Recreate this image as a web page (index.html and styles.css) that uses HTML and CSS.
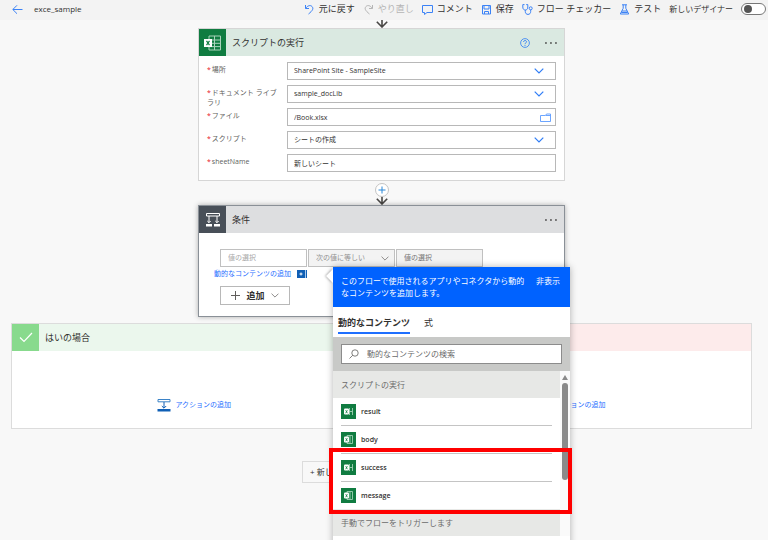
FILE: index.html
```html
<!DOCTYPE html>
<html lang="ja">
<head>
<meta charset="utf-8">
<title>exce_sample</title>
<link rel="stylesheet" href="styles.css">
</head>
<body>
<svg class="defs" aria-hidden="true">
  <symbol id="excel" viewBox="0 0 18 16"><path d="M5 1h11.500v14H5zM5 5h11.500M5 8.300h11.500M5 11.600h11.500M10.500 1v14" fill="none" stroke="#a9d3bb"/><path d="M0 4h8v8H0z" fill="#fff"/><path d="M2.500 5.800l3 4.400M5.500 5.800l-3 4.400" stroke="#107c41" stroke-width="1.200"/></symbol>
  <symbol id="excel-item" viewBox="0 0 15 15"><path d="M8.500 4v7M11.500 4v7M7 7.500h4.500" fill="none" stroke="#9fd0b4" stroke-width=".9"/><rect x="3" y="4.500" width="5" height="6" rx="1" fill="#fff"/><path d="M4.700 6.200l1.700 3M6.400 6.200l-1.700 3" stroke="#107c41" stroke-width=".8"/></symbol>
  <symbol id="excel-doc" viewBox="0 0 15 15"><path d="M6 3.500h5.500v8H6zM9 3.500v8" fill="none" stroke="#9fd0b4" stroke-width=".9"/><rect x="3" y="4.500" width="5" height="6" rx="1" fill="#fff"/><path d="M4.700 6.200l1.700 3M6.400 6.200l-1.700 3" stroke="#107c41" stroke-width=".8"/></symbol>
  <symbol id="chevron" viewBox="0 0 10 6"><path d="M.7.700L5 5 9.300.700" fill="none" stroke="currentColor" stroke-width="1.200"/></symbol>
  <symbol id="arrow" viewBox="0 0 12 8"><path d="M6 0v7M.8 1.800L6 7l5.200-5.200" fill="none" stroke="#484644" stroke-width="1.600"/></symbol>
  <symbol id="action" viewBox="0 0 14 14"><path d="M1 1.500h12v2.300H1z" fill="#fff" stroke="#3b83c7"/><path d="M7 4v6M4.800 8L7 10.200 9.200 8" fill="none" stroke="#0f5fb5"/><path d="M.5 11h13v2.500H.5z" fill="#0f5fb5"/></symbol>
</svg>
<div class="app">
  <header class="topbar">
    <button class="tool" aria-label="戻る"><svg class="icon-back" viewBox="0 0 11 10"><path d="M10.500 5H1M5 .8L.8 5 5 9.200" fill="none" stroke="currentColor"/></svg></button>
    <h1 class="title">exce_sample</h1>
    <nav class="tools">
      <button class="tool"><svg viewBox="0 0 11 11"><path d="M1.500 1v3.500H5M1.800 4.300C3.500 1.500 6.500.8 8 2.500c1.800 2 .8 4-3.500 7.500" fill="none" stroke="currentColor"/></svg><span>元に戻す</span></button>
      <button class="tool" disabled><svg viewBox="0 0 11 11"><path d="M9.500 1v3.500H6M9.200 4.300C7.500 1.500 4.500.8 3 2.500c-1.800 2-.8 4 3.500 7.500" fill="none" stroke="currentColor"/></svg><span>やり直し</span></button>
      <button class="tool"><svg viewBox="0 0 11 11"><path d="M.5 1.500h10v7H5L2.500 10.500v-2h-2z" fill="none" stroke="currentColor"/></svg><span>コメント</span></button>
      <button class="tool"><svg viewBox="0 0 11 11"><path d="M1.500 1.500h8v8.500h-8zM3 1.500v3.500h5V1.500M3.500 10V7.500h4V10" fill="none" stroke="currentColor"/></svg><span>保存</span></button>
      <button class="tool"><svg viewBox="0 0 11 11"><path d="M2.500.6H.8V3c0 2 1 3 2.500 3S5.800 5 5.800 3V.6H4.200M3.300 6v1.500C3.300 9.500 4.500 10.400 6 10.400s2.700-1 2.700-3V5.800" fill="none" stroke="currentColor"/><circle cx="8.700" cy="4.300" r="1.500" fill="none" stroke="currentColor"/></svg><span>フロー チェッカー</span></button>
      <button class="tool"><svg viewBox="0 0 11 11"><path d="M3 .8h5M4.200.8v3.500L1.300 10h8.400L6.800 4.300V.8M3 7h5M2.300 8.500h6.400" fill="none" stroke="currentColor"/></svg><span>テスト</span></button>
      <label class="designer" for="designer">新しいデザイナー</label>
      <input class="toggle" id="designer" type="checkbox" role="switch">
    </nav>
  </header>

  <main class="flow">
    <svg class="arrow" aria-hidden="true"><use href="#arrow"/></svg>
    <section class="card">
      <div class="card-head excel-head">
        <span class="tile green"><svg class="tile-icon"><use href="#excel"/></svg></span>
        <h2>スクリプトの実行</h2>
        <button class="plain blue" aria-label="ヘルプ"><svg class="help" viewBox="0 0 10 10"><circle cx="5" cy="5" r="4.400" fill="none" stroke="currentColor" stroke-width=".8"/><path d="M3.600 4c0-2 2.900-2 2.900-.2C6.500 5 5 4.800 5 6.200M5 7v.9" fill="none" stroke="currentColor" stroke-width=".9"/></svg></button>
        <button class="plain" aria-label="メニュー"><svg class="dots" viewBox="0 0 14 4"><path d="M1.200 1.300h1.500v1.500H1.200zM6.200 1.300h1.500v1.500H6.200zM11.200 1.300h1.500v1.500h-1.500z" fill="currentColor"/></svg></button>
      </div>
      <div class="fields">
        <label for="site"><i>*</i>場所</label>
        <div class="box"><select id="site"><option>SharePoint Site - SampleSite</option></select><svg class="chev"><use href="#chevron"/></svg></div>
        <label for="lib"><i>*</i>ドキュメント ライブラリ</label>
        <div class="box"><select id="lib"><option>sample_docLib</option></select><svg class="chev"><use href="#chevron"/></svg></div>
        <label for="file"><i>*</i>ファイル</label>
        <div class="box file"><input id="file" type="text" value="/Book.xlsx"><svg class="folder" viewBox="0 0 11 9"><path d="M.5 2.500h5L6.500 1h4v7.500H.5zM6 2.500h4.500" fill="none" stroke="currentColor" stroke-width=".9"/></svg></div>
        <label for="script"><i>*</i>スクリプト</label>
        <div class="box"><select id="script"><option>シートの作成</option></select><svg class="chev"><use href="#chevron"/></svg></div>
        <label for="sheet"><i>*</i>sheetName</label>
        <div class="box"><input id="sheet" type="text" value="新しいシート"></div>
      </div>
    </section>

    <div class="connector">
      <button class="insert" aria-label="新しいステップの挿入"><svg viewBox="0 0 8 8"><path d="M4 .5v7M.5 4h7" stroke="#2b88d8"/></svg></button>
      <svg class="arrow" aria-hidden="true"><use href="#arrow"/></svg>
    </div>

    <section class="card condition">
      <div class="card-head gray-head">
        <span class="tile slate"><svg class="cond-icon" viewBox="0 0 16 16"><path d="M1.500 1.500h13v2.500h-13z" fill="none" stroke="#fff"/><path d="M4 4v6.500M12 4v6.500M2.300 9L4 10.700 5.700 9M10.300 9l1.700 1.700L13.700 9" fill="none" stroke="#fff"/><path d="M1 12h6v2.500H1zM9 12h6v2.500H9z" fill="#fff"/></svg></span>
        <h2>条件</h2>
        <button class="plain" aria-label="メニュー"><svg class="dots" viewBox="0 0 14 4"><path d="M1.200 1.300h1.500v1.500H1.200zM6.200 1.300h1.500v1.500H6.200zM11.200 1.300h1.500v1.500h-1.500z" fill="currentColor"/></svg></button>
      </div>
      <div class="cond-body">
        <div class="operands">
          <input type="text" placeholder="値の選択" aria-label="値の選択">
          <div class="operator"><select disabled aria-label="演算子"><option>次の値に等しい</option></select><svg class="chev-s"><use href="#chevron"/></svg></div>
          <input class="right" type="text" placeholder="値の選択" aria-label="比較する値" disabled>
        </div>
        <a class="dynamic" href="#panel">動的なコンテンツの追加<svg viewBox="0 0 10 8"><path d="M0 0h10v8H0z" fill="#0f5fb5"/><path d="M8.500 0v8" stroke="#a9cbef"/><path d="M4 2.500v3M2.500 4h3" stroke="#fff"/></svg></a>
        <button class="add"><svg class="plus" viewBox="0 0 9 9"><path d="M4.500 0v9M0 4.500h9" stroke="#605e5c"/></svg><b>追加</b><svg class="chev-s"><use href="#chevron"/></svg></button>
      </div>

      <aside class="panel" id="panel">
        <div class="panel-head"><p>このフローで使用されるアプリやコネクタから動的なコンテンツを追加します。</p><button class="hide">非表示</button></div>
        <div class="tabs" role="tablist">
          <button class="tab active" role="tab" aria-selected="true">動的なコンテンツ</button>
          <button class="tab" role="tab" aria-selected="false">式</button>
        </div>
        <div class="search"><div class="search-box"><svg viewBox="0 0 10 10"><circle cx="6" cy="4" r="3.200" fill="none" stroke="#605e5c" stroke-width=".8"/><path d="M3.700 6.300L.5 9.500" stroke="#605e5c" stroke-width=".8"/></svg><input type="search" placeholder="動的なコンテンツの検索" aria-label="動的なコンテンツの検索"></div></div>
        <div class="results">
          <div class="list">
            <h3>スクリプトの実行</h3>
            <button class="item"><svg><use href="#excel-item"/></svg>result</button>
            <button class="item"><svg><use href="#excel-doc"/></svg>body</button>
            <button class="item"><svg><use href="#excel-item"/></svg>success</button>
            <button class="item last"><svg><use href="#excel-doc"/></svg>message</button>
            <h3>手動でフローをトリガーします</h3>
          </div>
          <div class="scrollbar" aria-hidden="true"><span class="up"></span><span class="thumb"></span></div>
        </div>
        <span class="highlight"></span>
      </aside>
    </section>

    <div class="branches">
      <section class="branch">
        <div class="card-head yes"><span class="tile light-green"><svg class="mark" viewBox="0 0 14 11"><path d="M1 5.500L5 9.500 13 1" fill="none" stroke="#fff" stroke-width="1.200"/></svg></span><h2>はいの場合</h2></div>
        <a class="action" href="#yes"><svg><use href="#action"/></svg>アクションの追加</a>
      </section>
      <section class="branch">
        <div class="card-head no"><span class="tile red"><svg class="mark" viewBox="0 0 14 11"><path d="M2.500 1l9 9M11.500 1l-9 9" stroke="#fff" stroke-width="1.200"/></svg></span><h2>いいえの場合</h2></div>
        <a class="action" href="#no"><svg><use href="#action"/></svg>アクションの追加</a>
      </section>
    </div>

    <div class="footer"><button class="step">+ 新しいステップ</button><button class="save">保存</button></div>
  </main>
</div>
</body>
</html>
```
FILE: styles.css
```css
* { box-sizing: border-box; }
body {
  margin: 0;
  background: #f8f8f8;
  color: #323130;
  font: 8px/12px "Open Sans", "Noto Sans CJK JP", sans-serif;
}
h1, h2, h3, p { margin: 0; font-weight: 400; }
button, input, select { font: inherit; color: inherit; margin: 0; padding: 0; border: 0; background: none; border-radius: 0; }
select { appearance: none; opacity: 1; }
input { outline: 0; min-width: 0; }
a { text-decoration: none; color: #1f6fff; }
svg { display: block; flex: none; }
.defs { display: none; }
.app { height: 100vh; overflow: hidden; }

.topbar { display: flex; align-items: center; height: 20px; padding: 0 2px 2px 12px; background: #f3f3f3; font-size: 9px; }
.title { margin-left: 11px; font-size: 8px; }
.tools { display: flex; align-items: center; gap: 8px; margin-left: auto; }
.tool { display: flex; align-items: center; gap: 4px; white-space: nowrap; }
.tool svg { width: 11px; height: 11px; color: #3b82f6; }
.tool:disabled, .tool:disabled svg { color: #b5b5b5; }
.designer { font-size: 8px; white-space: nowrap; }
.toggle { appearance: none; display: flex; align-items: center; width: 25px; height: 12px; padding-left: 2px; border: 1px solid #777; border-radius: 6px; background: #fff; }
.toggle::before { content: ""; width: 8px; height: 8px; border-radius: 4px; background: #555; }

.flow { display: flex; flex-direction: column; align-items: center; padding: 0 16px 0 11px; }
.arrow { width: 12px; height: 8px; }
.card { width: 367px; max-width: 100%; border: 1px solid #d6d6d6; background: #fff; }
.card-head { display: flex; align-items: center; height: 27px; padding-right: 6px; gap: 14px; font-size: 9px; }
.card-head h2 { flex: 1; margin-left: -8px; font-size: 9px; }
.excel-head { background: #dae9e1; }
.gray-head { background: #dddee0; }
.tile { display: grid; place-items: center; width: 27px; height: 27px; }
.green { background: #107c41; }
.slate { background: #484f58; }
.light-green { background: #88da8d; }
.red { background: #e88; }
.tile-icon { width: 18px; height: 16px; }
.cond-icon { width: 16px; height: 16px; }
.mark { width: 14px; height: 11px; }
.blue { color: #2f7df6; }
.help { width: 10px; height: 10px; }
.dots { width: 14px; height: 4px; }

.fields { display: grid; grid-template-columns: 80px 1fr; grid-auto-rows: 18px; row-gap: 5px; padding: 6px 8px 8px; }
.fields label { padding: 3px 6px 0 0; line-height: 10px; font-size: 7px; color: #605e5c; }
.fields i { color: #e81123; font-style: normal; margin-right: 1px; }
.box { display: flex; align-items: center; padding: 0 11px 0 6px; border: 1px solid #b8b8b8; background: #fff; font-size: 7px; }
.box select, .box input { flex: 1; height: 16px; }
.file { padding-right: 4px; }
.chev { width: 10px; height: 6px; color: #2f7df6; }
.folder { width: 11px; height: 9px; color: #5b9bff; }

.connector { display: flex; flex-direction: column; align-items: center; height: 24px; padding-top: 2px; }
.insert { display: grid; place-items: center; width: 14px; height: 14px; border: 1px solid #c4c4c4; border-radius: 50%; background: #fff; }
.insert svg { width: 8px; height: 8px; }

.condition { position: relative; border-color: #8a9097; box-shadow: 0 0 5px rgba(0, 0, 0, .3); }
.cond-body { padding: 16px 21px 11px; font-size: 7px; }
.operands { display: grid; grid-template-columns: 87px 87px 87px; gap: 1px; height: 18px; }
.operands input, .operator { border: 1px solid #c0c0c0; padding: 0 7px; }
.operands input::placeholder { color: #a8a8a8; opacity: 1; }
.operands .right, .operator { background: #f3f3f3; }
.operands .right::placeholder { color: #767676; }
.operator { display: flex; align-items: center; color: #909090; padding-right: 5px; }
.operator select { flex: 1; min-width: 0; }
.chev-s { width: 8px; height: 5px; color: #8a8886; }
.dynamic { display: flex; align-items: center; gap: 6px; height: 14px; margin-left: -6px; }
.dynamic svg { width: 10px; height: 8px; }
.add { display: flex; align-items: center; justify-content: center; gap: 6px; width: 70px; height: 19px; margin-top: 5px; border: 1px solid #b8b8b8; background: #fff; font-size: 9px; }
.plus { width: 9px; height: 9px; }

.panel { position: absolute; z-index: 2; top: 61px; left: 134px; width: 237px; height: 320px; background: #fff; box-shadow: 0 0 7px rgba(0, 0, 0, .3); }
.panel::before { content: ""; position: absolute; top: 2px; left: -7px; border: 7px solid transparent; border-left: 0; border-right-color: #fff; filter: drop-shadow(-1px 0 1px rgba(0, 0, 0, .3)); }
.panel-head { display: flex; gap: 10px; height: 40px; padding: 8px 10px 0 8px; background: #0062ff; color: #fff; }
.panel-head p { flex: 1; }
.hide { height: 12px; white-space: nowrap; }
.tabs { display: flex; gap: 14px; height: 30px; padding: 6px 5px 3px; font-size: 9px; }
.tab { height: 21px; border-bottom: 2px solid transparent; }
.active { border-color: #1f6fff; font-weight: 700; }
.search { padding: 7px 8px; background: #c8c9c7; }
.search-box { display: flex; align-items: center; gap: 8px; height: 20px; padding: 0 7px; border: 1px solid #8c8c8c; background: #fff; }
.search-box svg { width: 10px; height: 10px; }
.search-box input { flex: 1; }
.search-box input::placeholder { color: #6b6b6b; opacity: 1; }
.results { display: flex; }
.list { flex: 1; }
.list h3 { height: 27px; padding-left: 8px; font-size: 8px; line-height: 27px; background: #e7e8e6; color: #6b6b6b; }
.item { display: flex; align-items: center; gap: 5px; width: calc(100% - 16px); height: 28px; margin: 0 8px; border-bottom: 1px solid #c4c4c4; font-size: 7px; font-weight: 600; }
.item svg { width: 15px; height: 15px; background: #107c41; }
.last { height: 27px; border: 0; }
.scrollbar { display: flex; flex-direction: column; align-items: center; gap: 3px; width: 10px; padding-top: 4px; background: #fafafa; }
.up { border: 3px solid transparent; border-top: 0; border-bottom: 5px solid #8a8a8a; }
.thumb { width: 6px; height: 97px; border-radius: 3px; background: #8a8a8a; }
.highlight { position: absolute; top: 181px; left: -4px; width: 243px; height: 66px; border: 4px solid #f00; }

.branches { display: flex; gap: 8px; width: 100%; margin-top: 6px; }
.branch { flex: 1; border: 1px solid #dcdcdc; background: #fff; }
.yes { background: #ebf7ed; }
.no { background: #fdebeb; }
.action { display: flex; align-items: center; justify-content: center; gap: 4px; padding: 47px 0 16px; font-size: 7px; line-height: 14px; }
.action svg { width: 14px; height: 14px; }

.footer { display: flex; gap: 8px; margin-top: 32px; }
.footer button { height: 22px; padding: 0 7px; border: 1px solid #dcdcdc; font-size: 8px; text-align: left; white-space: nowrap; }
.step { min-width: 94px; }
.save { min-width: 57px; }
```
